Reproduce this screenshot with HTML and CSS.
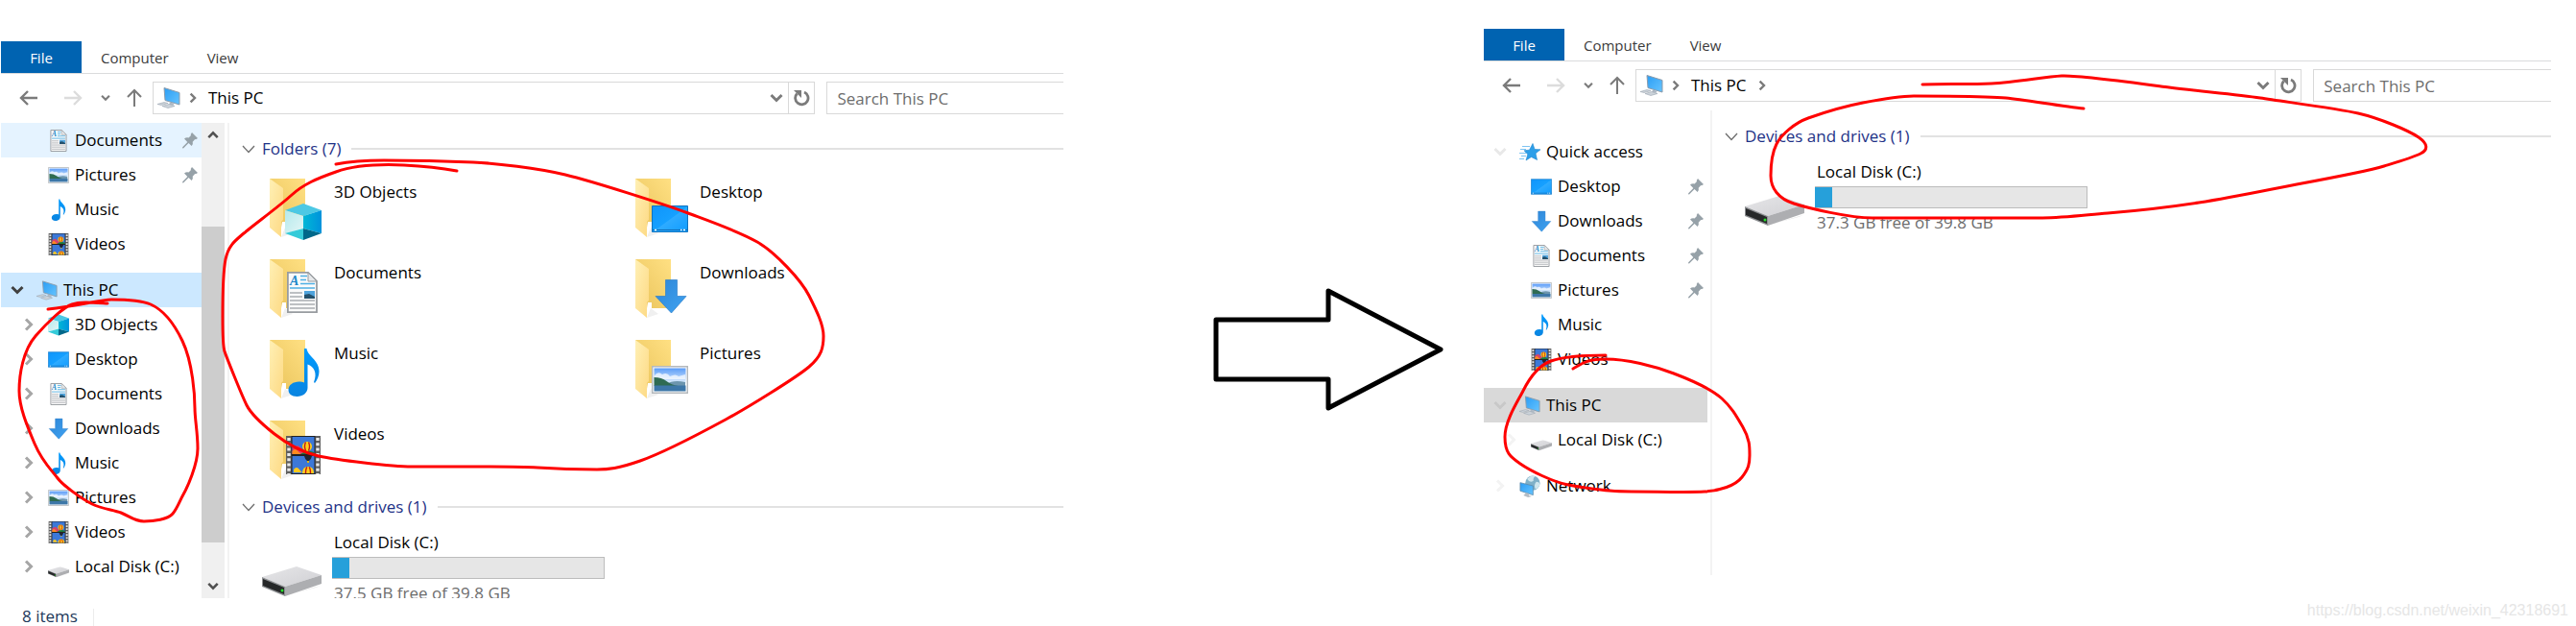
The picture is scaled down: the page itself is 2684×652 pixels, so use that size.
FILE: index.html
```html
<!DOCTYPE html>
<html lang="en">
<head>
  <meta charset="UTF-8" />
  <meta name="viewport" content="width=device-width, initial-scale=1.0"/>
  <title>This PC</title>
  <link rel="stylesheet" href="styles.css">
</head>
<body>

  <!-- shared icons -->
  <svg class="sprite" aria-hidden="true">
    <defs>
      <linearGradient id="g-back" x1="0" y1="1" x2="1" y2="0"><stop offset="0" stop-color="#e9c35a"/><stop offset="1" stop-color="#ffe083"/></linearGradient>
      <linearGradient id="g-flap" x1="0" y1="0" x2="1" y2="1"><stop offset="0" stop-color="#fff0b5"/><stop offset="1" stop-color="#fdd983"/></linearGradient>
      <linearGradient id="g-blue" x1="0" y1="0" x2="1" y2="1"><stop offset="0" stop-color="#0f95fb"/><stop offset=".5" stop-color="#16a0ff"/><stop offset=".52" stop-color="#2eabff"/><stop offset="1" stop-color="#109cff"/></linearGradient>
      <linearGradient id="g-arrow" x1="0" y1="0" x2="1" y2="1"><stop offset="0" stop-color="#2f86d6"/><stop offset="1" stop-color="#3fa3f2"/></linearGradient>
      <linearGradient id="g-note" x1="0" y1="0" x2="0" y2="1"><stop offset="0" stop-color="#009bff"/><stop offset="1" stop-color="#0a84e0"/></linearGradient>
      <linearGradient id="g-sky" x1="0" y1="0" x2="0" y2="1"><stop offset="0" stop-color="#5b9cf8"/><stop offset="1" stop-color="#e4f2fd"/></linearGradient>
      <linearGradient id="g-cube-left" x1="0" y1="0" x2="1" y2="1"><stop offset="0" stop-color="#b5e9ec"/><stop offset="1" stop-color="#e2f6f6"/></linearGradient>
      <linearGradient id="g-cube-right" x1="0" y1="0" x2="1" y2="0"><stop offset="0" stop-color="#00b7d6"/><stop offset="1" stop-color="#0092dc"/></linearGradient>
      <linearGradient id="g-drive" x1="0" y1="0" x2="1" y2="1"><stop offset="0" stop-color="#e6e6e8"/><stop offset="1" stop-color="#d0d0d4"/></linearGradient>
      <linearGradient id="g-screen" x1="0" y1="0" x2="1" y2="1"><stop offset="0" stop-color="#2a9df4"/><stop offset="1" stop-color="#66c4ff"/></linearGradient>
    </defs>

    <symbol id="folder" viewBox="0 0 60 66">
      <path d="M13 62l12-4-8-6z" fill="#f0f0f0"/>
      <path d="M1 1h37v51H1z" fill="url(#g-back)"/>
      <path d="M13 52h5v-6h-4z" fill="#fff"/>
      <path d="M1 1l14 10v33l-2 2v16L1 52z" fill="url(#g-flap)"/>
    </symbol>

    <symbol id="cube" viewBox="0 0 38 38">
      <path d="M19 0l19 7-19 6L0 7z" fill="#4cc8e4"/>
      <path d="M0 7l19 6v13L0 31z" fill="url(#g-cube-left)"/>
      <path d="M38 7l-19 6v13l19 5z" fill="url(#g-cube-right)"/>
      <path d="M0 31l19-5v12z" fill="#35cbd9"/>
      <path d="M38 31l-19-5v12z" fill="#00688a"/>
    </symbol>

    <symbol id="desktop" viewBox="0 0 38 28">
      <path d="M.5.500h37v27H.5z" fill="url(#g-blue)" stroke="#1273be"/>
      <path d="M1 25.500h36" stroke="#0f6cb5" stroke-width="1"/>
      <path d="M3 25.500h2M30 25.500h1.500M33 25.500h2" stroke="#fff" stroke-width="1.500"/>
    </symbol>

    <symbol id="document" viewBox="0 0 32 43">
      <path d="M.9.900H22l9 9v32.200H.9z" fill="#fafafa" stroke="#989ca0" stroke-width="1.800"/>
      <path d="M22 .9V10h9z" fill="#e6e8ea" stroke="#989ca0"/>
      <text x="3" y="14" font-family="Liberation Serif, serif" font-size="14" font-style="italic" font-weight="bold" fill="#2187c8">A</text>
      <path d="M14 4.500h7M14 8.500h6M14 12.500h15M3 17h26" stroke="#4fb0e4" stroke-width="1.600"/>
      <path d="M3 22h13M3 26h13M3 30h26M3 34h26M3 38h26" stroke="#a9adb1" stroke-width="1.500"/>
      <path d="M18 20h11v8H18z" fill="#4fa3dc"/>
      <path d="M18 24l5-1 6 3v2H18z" fill="#24506b"/>
    </symbol>

    <symbol id="download" viewBox="0 0 36 37">
      <path d="M12.500 1.500h12v17H34L18.500 36 2 18.500h10.500z" fill="url(#g-arrow)" stroke="#2f7fca" stroke-width=".7"/>
    </symbol>

    <symbol id="music" viewBox="0 0 33 51">
      <path d="M17 1h2.500c1 8 13 12 13 24 0 4-2 9-4.500 12l-1-1c4-10 0-16-6.500-18.500V42c0 5-5 9-11 9-6 0-9-3-9-7 0-5 5-8.500 11-8.500 2 0 4 .4 5.500 1z" fill="url(#g-note)"/>
    </symbol>

    <symbol id="picture" viewBox="0 0 38 29">
      <path d="M.7.700h36.600v27.600H.7z" fill="#fff" stroke="#b3b8bc" stroke-width="1.400"/>
      <path d="M2.500 2.500h33v16h-33z" fill="url(#g-sky)"/>
      <path d="M3 10q4-5 8-1 5-3 8 2 6-3 9 0l7-2v5H3z" fill="#fff" opacity=".7"/>
      <path d="M15 19q8-5 20-2v4H15z" fill="#6c95ae"/>
      <path d="M2.500 12q8 0 13 4t12 5H2.500z" fill="#2f6b52"/>
      <path d="M2.500 20.500h33v6h-33z" fill="#3d77a8"/>
    </symbol>

    <symbol id="video" viewBox="0 0 36 40">
      <path d="M0 0h36v40H0z" fill="#5f5f5f"/>
      <path d="M3 2v38M33 2v38" stroke="#e8e8e8" stroke-width="3.400" stroke-dasharray="3 2.300"/>
      <path d="M5.500 0h25v40h-25z" fill="#222"/>
      <path d="M6.500 1h23v18h-23zM6.500 21h23v18h-23z" fill="#3c78d8"/>
      <path d="M6.500 12l6-2 5 4 4 5h-15z" fill="#d8436b"/>
      <path d="M6.500 16q3-4 6 0l3 3h-9z" fill="#ff8a1f"/>
      <path d="M15 19l7-4 7.500 2v2z" fill="#1c7a3a"/>
      <circle cx="22" cy="11" r="5" fill="#ffcf1a"/>
      <path d="M20.500 6.500q-2 4 0 9M23.500 6.500q2 4 0 9" stroke="#c2181b" stroke-width="1.400" fill="none"/>
      <path d="M19 21h8q-1 4-3 5h-2q-2-1-3-5z" fill="#1f2433"/>
      <path d="M22 26h2v2h-2z" fill="#d8b21c"/>
      <path d="M8 35q3-4 6 0t4 3H8z" fill="#ffc91c"/>
      <path d="M17 39q0-7 6-7t6 7z" fill="#ffcf1a"/>
      <path d="M20.500 39q0-5 1.500-6.500M25.500 39q0-5-1.500-6.500" stroke="#c2181b" stroke-width="1.400" fill="none"/>
    </symbol>

    <symbol id="pc" viewBox="0 0 24 23">
      <path d="M7 1l16 5v12.500L8 14z" fill="url(#g-screen)" stroke="#8b9bab"/>
      <path d="M13 16l4 1v2h-5z" fill="#aeb9c4"/>
      <path d="M0 18l7-2 4 1-7 2zM5 20l7-2 6 2-7 2z" fill="#ccd3da" stroke="#9aa5b0" stroke-width=".6"/>
    </symbol>

    <symbol id="drive" viewBox="0 0 62 32">
      <path d="M22 31l34-9 5-2z" fill="#e2e2e2"/>
      <path d="M0 11L36 0l26 9-38 12z" fill="url(#g-drive)"/>
      <path d="M24 21L62 9v9L24 31z" fill="#adaeb1"/>
      <path d="M0 11l24 10v10L0 21z" fill="#8d8f92"/>
      <path d="M1 13l22 9v7L1 20z" fill="#262829"/>
      <circle cx="21" cy="25" r="1.500" fill="#25e02b"/>
    </symbol>
    <symbol id="drive-small" viewBox="0 -30 62 62">
      <use href="#drive" width="62" height="32"/>
    </symbol>

    <symbol id="star" viewBox="0 0 22 20">
      <path d="M14 1l2 6 6 .3-5 4 1.500 6.700L12.500 15 7 18.500l1.800-6.300L5 8.300l5.500-.6z" fill="#2d9fe9" stroke="#1c84cf" stroke-width=".6"/>
      <path d="M3 4h8M1 7h6M0 11h7M2 14h5M0 17h5" stroke="#7ec4f2" stroke-width="1"/>
    </symbol>

    <symbol id="network" viewBox="0 0 22 24">
      <circle cx="14" cy="8.500" r="8" fill="#7fb0c8"/>
      <path d="M8 4q5-5 9-3-3 2-2 5-4 3-7-2zM18 7q3 0 4 2-1 5-5 6-2-5 1-8z" fill="#cfe6ee"/>
      <path d="M.5 8l14 3.500v10L.5 17z" fill="url(#g-screen)" stroke="#5d88a8" stroke-width=".8"/>
      <path d="M7 19l3 1v2l3 1-4 1-5-2z" fill="#b4bcc4"/>
    </symbol>

    <symbol id="pin" viewBox="0 0 16 17">
      <path d="M10 0l6 6-2 1.300-.8-.3-2.500 2.700q.8 2.500-1 4.300L6.500 11 1 16.500l-1-.2.200-1L5.300 10 2 6.500q2-1.700 4.500-1L9 3l-.3-1z" fill="#96a1a8"/>
    </symbol>

    <symbol id="chev-right" viewBox="0 0 10 14"><path d="M2 1.500L7.500 7 2 12.500" fill="none" stroke="currentColor" stroke-width="3"/></symbol>
    <symbol id="chev-down" viewBox="0 0 14 10"><path d="M1.500 2L7 7.500 12.500 2" fill="none" stroke="currentColor" stroke-width="3"/></symbol>
    <symbol id="chev-thin" viewBox="0 0 14 9"><path d="M1 1l6 6.500L13 1" fill="none" stroke="currentColor" stroke-width="1.300"/></symbol>
    <symbol id="arrow-left" viewBox="0 0 20 16"><path d="M19 8H2M9 1L2 8l7 7" fill="none" stroke="currentColor" stroke-width="2.400"/></symbol>
    <symbol id="arrow-up" viewBox="0 0 16 20"><path d="M8 19V2M1 9l7-7 7 7" fill="none" stroke="currentColor" stroke-width="2"/></symbol>
    <symbol id="refresh" viewBox="0 0 18 18"><path d="M12 3a6.700 6.700 0 1 1-7.500 1.500" fill="none" stroke="currentColor" stroke-width="2.800"/><path d="M1 1h8v8z" fill="currentColor"/></symbol>
  </svg>

  <div class="comparison">

    <!-- before -->
    <div class="explorer explorer--before">

      <div class="tabs">
        <button class="tab tab--file">File</button>
        <button class="tab">Computer</button>
        <button class="tab">View</button>
      </div>

      <div class="toolbar">
        <button class="nav-button" aria-label="Back"><svg width="20" height="16"><use href="#arrow-left"/></svg></button>
        <button class="nav-button nav-button--forward" aria-label="Forward"><svg width="20" height="16"><use href="#arrow-left"/></svg></button>
        <button class="nav-button nav-button--recent" aria-label="Recent locations"><svg width="10" height="8"><use href="#chev-down"/></svg></button>
        <button class="nav-button nav-button--up" aria-label="Up"><svg width="16" height="20"><use href="#arrow-up"/></svg></button>
        <div class="address">
          <svg width="24" height="24"><use href="#pc"/></svg>
          <span class="crumb-arrow"><svg width="8" height="12"><use href="#chev-right"/></svg></span>
          <a class="crumb" href="#">This PC</a>
          <button class="address-button" aria-label="Previous locations"><svg width="14" height="10"><use href="#chev-down"/></svg></button>
          <button class="address-button address-button--refresh" aria-label="Refresh"><svg width="18" height="18"><use href="#refresh"/></svg></button>
        </div>
        <input class="search" type="text" placeholder="Search This PC" aria-label="Search This PC">
      </div>

      <div class="content">
        <nav class="sidebar">
          <ul class="tree">
            <li class="tree-item tree-item--hover"><a href="#"><svg class="icon"><use href="#document"/></svg>Documents</a><svg class="pin"><use href="#pin"/></svg></li>
            <li class="tree-item"><a href="#"><svg class="icon"><use href="#picture"/></svg>Pictures</a><svg class="pin"><use href="#pin"/></svg></li>
            <li class="tree-item"><a href="#"><svg class="icon"><use href="#music"/></svg>Music</a></li>
            <li class="tree-item"><a href="#"><svg class="icon"><use href="#video"/></svg>Videos</a></li>
            <li class="tree-item tree-item--root tree-item--selected"><button class="toggle toggle--open" aria-label="Collapse This PC"><svg width="14" height="10"><use href="#chev-down"/></svg></button><a href="#"><svg class="icon"><use href="#pc"/></svg>This PC</a></li>
            <li class="tree-item"><button class="toggle" aria-label="Expand 3D Objects"><svg width="10" height="14"><use href="#chev-right"/></svg></button><a href="#"><svg class="icon"><use href="#cube"/></svg>3D Objects</a></li>
            <li class="tree-item"><button class="toggle" aria-label="Expand Desktop"><svg width="10" height="14"><use href="#chev-right"/></svg></button><a href="#"><svg class="icon"><use href="#desktop"/></svg>Desktop</a></li>
            <li class="tree-item"><button class="toggle" aria-label="Expand Documents"><svg width="10" height="14"><use href="#chev-right"/></svg></button><a href="#"><svg class="icon"><use href="#document"/></svg>Documents</a></li>
            <li class="tree-item"><button class="toggle" aria-label="Expand Downloads"><svg width="10" height="14"><use href="#chev-right"/></svg></button><a href="#"><svg class="icon"><use href="#download"/></svg>Downloads</a></li>
            <li class="tree-item"><button class="toggle" aria-label="Expand Music"><svg width="10" height="14"><use href="#chev-right"/></svg></button><a href="#"><svg class="icon"><use href="#music"/></svg>Music</a></li>
            <li class="tree-item"><button class="toggle" aria-label="Expand Pictures"><svg width="10" height="14"><use href="#chev-right"/></svg></button><a href="#"><svg class="icon"><use href="#picture"/></svg>Pictures</a></li>
            <li class="tree-item"><button class="toggle" aria-label="Expand Videos"><svg width="10" height="14"><use href="#chev-right"/></svg></button><a href="#"><svg class="icon"><use href="#video"/></svg>Videos</a></li>
            <li class="tree-item"><button class="toggle" aria-label="Expand Local Disk"><svg width="10" height="14"><use href="#chev-right"/></svg></button><a href="#"><svg class="icon"><use href="#drive-small"/></svg>Local Disk (C:)</a></li>
          </ul>
          <div class="scrollbar">
            <button class="scroll-button scroll-button--up" aria-label="Scroll up"><svg width="12" height="9"><use href="#chev-down"/></svg></button>
            <div class="scroll-track"><div class="scroll-thumb"></div></div>
            <button class="scroll-button" aria-label="Scroll down"><svg width="12" height="9"><use href="#chev-down"/></svg></button>
          </div>
        </nav>

        <main class="files">
          <h2 class="group-title"><svg width="14" height="9"><use href="#chev-thin"/></svg>Folders (7)</h2>
          <div class="folders">
            <a class="folder" href="#"><svg class="folder-icon" viewBox="0 0 60 66"><use href="#folder"/><use href="#cube" x="17" y="27" width="38" height="38"/></svg>3D Objects</a>
            <a class="folder" href="#"><svg class="folder-icon" viewBox="0 0 60 66"><use href="#folder"/><use href="#desktop" x="18" y="29" width="38" height="28"/></svg>Desktop</a>
            <a class="folder" href="#"><svg class="folder-icon" viewBox="0 0 60 66"><use href="#folder"/><use href="#document" x="19" y="14" width="32" height="43"/></svg>Documents</a>
            <a class="folder" href="#"><svg class="folder-icon" viewBox="0 0 60 66"><use href="#folder"/><use href="#download" x="20" y="21" width="36" height="37"/></svg>Downloads</a>
            <a class="folder" href="#"><svg class="folder-icon" viewBox="0 0 60 66"><use href="#folder"/><use href="#music" x="20" y="9" width="33" height="51"/></svg>Music</a>
            <a class="folder" href="#"><svg class="folder-icon" viewBox="0 0 60 66"><use href="#folder"/><use href="#picture" x="18" y="28" width="38" height="29"/></svg>Pictures</a>
            <a class="folder" href="#"><svg class="folder-icon" viewBox="0 0 60 66"><use href="#folder"/><use href="#video" x="18" y="17" width="36" height="40"/></svg>Videos</a>
          </div>
          <h2 class="group-title"><svg width="14" height="9"><use href="#chev-thin"/></svg>Devices and drives (1)</h2>
          <div class="drive">
            <svg class="drive-icon"><use href="#drive"/></svg>
            <div class="drive-info">
              <label for="disk-before">Local Disk (C:)</label>
              <progress id="disk-before" class="capacity" max="284" value="18"></progress>
              <p>37.5 GB free of 39.8 GB</p>
            </div>
          </div>
        </main>
      </div>

      <div class="status">8 items</div>

      <svg class="marks" viewBox="1 43 1107 609" width="1107" height="609">
        <path d="M112 316C95 315 84 314 75 317S50 335 37 350S20 390 20 407S28 443 36 462S54 490 60 498S86 520 96 525S118 531 126 534S140 543 150 543S175 541 180 535S187 522 191 515S206 484 206 467S203 437 203 425S201 378 190 355S166 321 157 317S127 312 116 312S80 319 50 322"/>
        <path d="M350 171C370 167 385 167 400 167S470 168 493 169S560 175 589 182S690 212 717 222S770 241 789 252S835 292 843 308S858 338 858 350S856 371 843 382S780 424 756 437S690 472 667 480S634 489 622 489S575 488 560 487S520 486 511 486S450 486 429 486S350 479 332 475S300 463 286 452S262 432 257 422S236 372 234 366S232 340 232 330S232 285 235 270S246 250 254 243S292 214 304 203S330 186 350 179S400 171 421 172S460 175 476 178"/>
      </svg>
    </div>

    <div class="arrow">
      <svg width="240" height="130" viewBox="1264 299 240 130"><path d="M1267 333h117v-30l117 61-117 61v-30h-117z"/></svg>
    </div>

    <!-- after -->
    <div class="explorer explorer--after">

      <div class="tabs">
        <button class="tab tab--file">File</button>
        <button class="tab">Computer</button>
        <button class="tab">View</button>
      </div>

      <div class="toolbar">
        <button class="nav-button" aria-label="Back"><svg width="20" height="16"><use href="#arrow-left"/></svg></button>
        <button class="nav-button nav-button--forward" aria-label="Forward"><svg width="20" height="16"><use href="#arrow-left"/></svg></button>
        <button class="nav-button nav-button--recent" aria-label="Recent locations"><svg width="10" height="8"><use href="#chev-down"/></svg></button>
        <button class="nav-button nav-button--up" aria-label="Up"><svg width="16" height="20"><use href="#arrow-up"/></svg></button>
        <div class="address">
          <svg width="24" height="24"><use href="#pc"/></svg>
          <span class="crumb-arrow"><svg width="8" height="12"><use href="#chev-right"/></svg></span>
          <a class="crumb" href="#">This PC</a>
          <span class="crumb-arrow"><svg width="8" height="12"><use href="#chev-right"/></svg></span>
          <button class="address-button" aria-label="Previous locations"><svg width="14" height="10"><use href="#chev-down"/></svg></button>
          <button class="address-button address-button--refresh" aria-label="Refresh"><svg width="18" height="18"><use href="#refresh"/></svg></button>
        </div>
        <input class="search" type="text" placeholder="Search This PC" aria-label="Search This PC">
      </div>

      <div class="content">
        <nav class="sidebar">
          <ul class="tree tree--idle">
            <li class="tree-item tree-item--root"><button class="toggle" aria-label="Collapse Quick access"><svg width="14" height="10"><use href="#chev-down"/></svg></button><a href="#"><svg class="icon"><use href="#star"/></svg>Quick access</a></li>
            <li class="tree-item"><a href="#"><svg class="icon"><use href="#desktop"/></svg>Desktop</a><svg class="pin"><use href="#pin"/></svg></li>
            <li class="tree-item"><a href="#"><svg class="icon"><use href="#download"/></svg>Downloads</a><svg class="pin"><use href="#pin"/></svg></li>
            <li class="tree-item"><a href="#"><svg class="icon"><use href="#document"/></svg>Documents</a><svg class="pin"><use href="#pin"/></svg></li>
            <li class="tree-item"><a href="#"><svg class="icon"><use href="#picture"/></svg>Pictures</a><svg class="pin"><use href="#pin"/></svg></li>
            <li class="tree-item"><a href="#"><svg class="icon"><use href="#music"/></svg>Music</a></li>
            <li class="tree-item"><a href="#"><svg class="icon"><use href="#video"/></svg>Videos</a></li>
            <li class="tree-item tree-item--root tree-item--selected"><button class="toggle" aria-label="Collapse This PC"><svg width="14" height="10"><use href="#chev-down"/></svg></button><a href="#"><svg class="icon"><use href="#pc"/></svg>This PC</a></li>
            <li class="tree-item"><button class="toggle toggle--faint" aria-label="Expand Local Disk"><svg width="10" height="14"><use href="#chev-right"/></svg></button><a href="#"><svg class="icon"><use href="#drive-small"/></svg>Local Disk (C:)</a></li>
            <li class="tree-item tree-item--root"><button class="toggle toggle--faint" aria-label="Expand Network"><svg width="10" height="14"><use href="#chev-right"/></svg></button><a href="#"><svg class="icon"><use href="#network"/></svg>Network</a></li>
          </ul>
        </nav>

        <main class="files">
          <h2 class="group-title"><svg width="14" height="9"><use href="#chev-thin"/></svg>Devices and drives (1)</h2>
          <div class="drive">
            <svg class="drive-icon"><use href="#drive"/></svg>
            <div class="drive-info">
              <label for="disk-after">Local Disk (C:)</label>
              <progress id="disk-after" class="capacity" max="284" value="18"></progress>
              <p>37.3 GB free of 39.8 GB</p>
            </div>
          </div>
        </main>
      </div>

      <svg class="marks" viewBox="1546 31 1112 568" width="1112" height="568">
        <path d="M2003 88C2030 87 2050 88 2075 87S2130 80 2148 79S2230 87 2260 91S2330 98 2355 102S2435 113 2457 118S2510 136 2520 143S2530 156 2522 160S2497 169 2484 173S2420 187 2393 192S2330 205 2291 211S2220 220 2196 222S2150 227 2128 227S1975 227 1951 227S1885 217 1869 212S1845 196 1845 183S1846 160 1851 150S1870 128 1884 123S1915 112 1941 107S1980 100 1994 100S2070 100 2090 102S2150 111 2171 113"/>
        <path d="M1673 370C1650 370 1630 371 1616 376S1592 397 1587 407S1568 438 1568 455S1574 476 1584 483S1618 502 1634 505S1675 512 1700 512S1760 513 1776 512S1808 506 1815 497S1823 483 1823 474S1823 457 1816 445S1804 424 1794 415S1765 397 1744 389S1695 374 1673 374S1647 380 1639 384"/>
      </svg>
    </div>

    <p class="watermark">https://blog.csdn.net/weixin_42318691</p>

  </div>

</body>
</html>
```
FILE: styles.css
```css
* {
  box-sizing: border-box;
}

body {
  margin: 0;
  background-color: #fff;
  font-family: 'Open Sans', 'Noto Sans', sans-serif;
  font-size: 17px;
  line-height: 24px;
  color: #000;
}

button {
  border: none;
  background: none;
  padding: 0;
  margin: 0;
  font: inherit;
  color: inherit;
  display: flex;
  align-items: center;
  justify-content: center;
}

a {
  color: inherit;
  text-decoration: none;
}

p {
  margin: 0;
}

svg {
  flex-shrink: 0;
}

.sprite {
  position: absolute;
  width: 0;
  height: 0;
}

.comparison {
  position: relative;
  display: grid;
  grid-template-columns: 1107fr 438fr 1112fr;
  align-items: start;
  padding: 0 26px 0 1px;
}

.explorer {
  position: relative;
}

.explorer--before {
  margin-top: 43px;
}

.explorer--after {
  margin-top: 30px;
}

/* ribbon */

.tabs {
  display: flex;
  height: 34px;
  border-bottom: 1px solid #dadbdc;
}

.tab {
  padding: 0 20px;
  font-size: 15px;
  color: #3c3c3c;
}

.tab--file {
  width: 84px;
  background-color: #0063b1;
  color: #fff;
}

.toolbar {
  display: flex;
  padding: 8px 0 9px 6px;
  color: #7b7b7b;
}

.nav-button {
  width: 46px;
}

.nav-button--forward {
  color: #dcdcdc;
}

.nav-button--forward svg {
  transform: scaleX(-1);
}

.nav-button--recent {
  width: 22px;
}

.nav-button--up {
  width: 38px;
}

.address {
  flex: 1;
  display: flex;
  align-items: center;
  height: 34px;
  margin-right: 12px;
  padding-left: 4px;
  border: 1px solid #d9d9d9;
}

.crumb {
  padding: 0 3px;
  color: #000;
}

.crumb-arrow {
  display: flex;
  justify-content: center;
  width: 26px;
}

.address-button {
  width: 24px;
  height: 100%;
}

.address-button:nth-last-child(2) {
  margin-left: auto;
}

.address-button--refresh {
  width: 27px;
  border-left: 1px solid #d9d9d9;
}

.search {
  width: 22.4%;
  height: 34px;
  padding: 0 10px;
  border: 1px solid #d9d9d9;
  border-right: none;
  border-radius: 0;
  font: inherit;
}

.search::placeholder {
  color: #6d6d6d;
}

/* navigation pane */

.content {
  display: grid;
  grid-template-columns: 236px 1fr;
}

.sidebar {
  display: flex;
  padding-right: 3px;
}

.tree {
  flex: 1;
  margin: 0;
  padding: 0 0 15px;
  list-style: none;
}

.tree--idle {
  padding: 25px 0 75px;
}

.tree-item {
  display: flex;
  align-items: center;
  height: 36px;
  padding-left: 15px;
}

.tree-item a {
  display: flex;
  align-items: center;
  gap: 6px;
  white-space: nowrap;
}

.tree-item > a:first-child {
  margin-left: 34px;
}

.tree-item--root {
  padding-left: 3px;
}

.tree-item--root:not(:first-child) {
  margin-top: 12px;
}

.tree-item--hover {
  background-color: #e5f3ff;
}

.tree-item--selected {
  background-color: #cce8ff;
}

.tree--idle .tree-item--selected {
  background-color: #d9d9d9;
}

.toggle {
  width: 28px;
  height: 28px;
  margin-right: 6px;
  color: #a6a6a6;
}

.toggle--open {
  color: #404040;
}

.tree--idle .toggle {
  color: #e8e8e8;
}

.tree--idle .tree-item--selected .toggle {
  color: #c8c8c8;
}

.tree--idle .toggle--faint {
  color: #f3f3f3;
}

.icon {
  width: 22px;
  height: 23px;
}

.pin {
  width: 16px;
  height: 17px;
  margin-left: auto;
  margin-right: 4px;
}

.scrollbar {
  display: flex;
  flex-direction: column;
  width: 24px;
  background-color: #f0f0f0;
}

.scroll-button {
  height: 26px;
  color: #505050;
}

.scroll-button--up {
  transform: rotate(180deg);
}

.scroll-track {
  flex: 1;
  padding: 82px 0 32px;
}

.scroll-thumb {
  height: 100%;
  background-color: #cdcdcd;
}

/* file area */

.files {
  height: 0;
  min-height: 100%;
  overflow: hidden;
  padding-top: 15px;
  border-left: 2px solid #f3f3f3;
}

.group-title {
  display: flex;
  align-items: center;
  gap: 7px;
  margin: 0;
  padding-left: 13px;
  font-size: 17px;
  font-weight: normal;
  color: #1e3287;
}

.group-title svg {
  color: #6d6d6d;
}

.group-title::after {
  content: '';
  flex: 1;
  height: 2px;
  margin-left: 4px;
  background-color: #e2e2e2;
}

.folders {
  display: grid;
  grid-template-columns: repeat(auto-fill, 381px);
  row-gap: 18px;
  padding: 18px 0 13px 41px;
}

.folder {
  display: flex;
  gap: 8px;
  line-height: 30px;
}

.folder-icon {
  width: 60px;
  height: 66px;
}

.drive {
  display: flex;
  gap: 11px;
  padding: 13px 0 0 34px;
}

.drive-icon {
  width: 62px;
  height: 32px;
  margin-top: 37px;
}

.drive-info {
  display: flex;
  flex-direction: column;
  gap: 3px;
  width: 284px;
}

.drive-info label,
.drive-info p {
  padding-left: 2px;
}

.drive-info p {
  color: #6d6d6d;
}

.capacity {
  appearance: none;
  display: block;
  width: 100%;
  height: 23px;
  border: 1px solid #bcbcbc;
  border-left: none;
}

.capacity::-webkit-progress-bar {
  background-color: #e6e6e6;
}

.capacity::-webkit-progress-value {
  background-color: #26a0da;
}

.status {
  height: 29px;
  padding: 8px 0 0 22px;
  line-height: 21px;
  color: #1e395b;
}

.status::after {
  content: '';
  display: inline-block;
  height: 18px;
  margin-left: 16px;
  border-left: 1px solid #ececec;
  vertical-align: middle;
}

/* hand-drawn marks over the windows */

.marks {
  position: absolute;
  top: 0;
  left: 0;
  pointer-events: none;
}

.explorer--after .marks {
  top: 1px;
}

.marks path {
  fill: none;
  stroke: #f00;
  stroke-width: 3;
  stroke-linecap: round;
}

.arrow {
  display: flex;
  justify-content: flex-end;
  padding: 299px 42px 0 0;
}

.arrow path {
  fill: none;
  stroke: #000;
  stroke-width: 5;
  stroke-linejoin: round;
}

.watermark {
  position: absolute;
  right: 8px;
  bottom: 4px;
  font-family: 'Liberation Sans', Arial, sans-serif;
  font-size: 16px;
  color: #e6e6e6;
}
```
